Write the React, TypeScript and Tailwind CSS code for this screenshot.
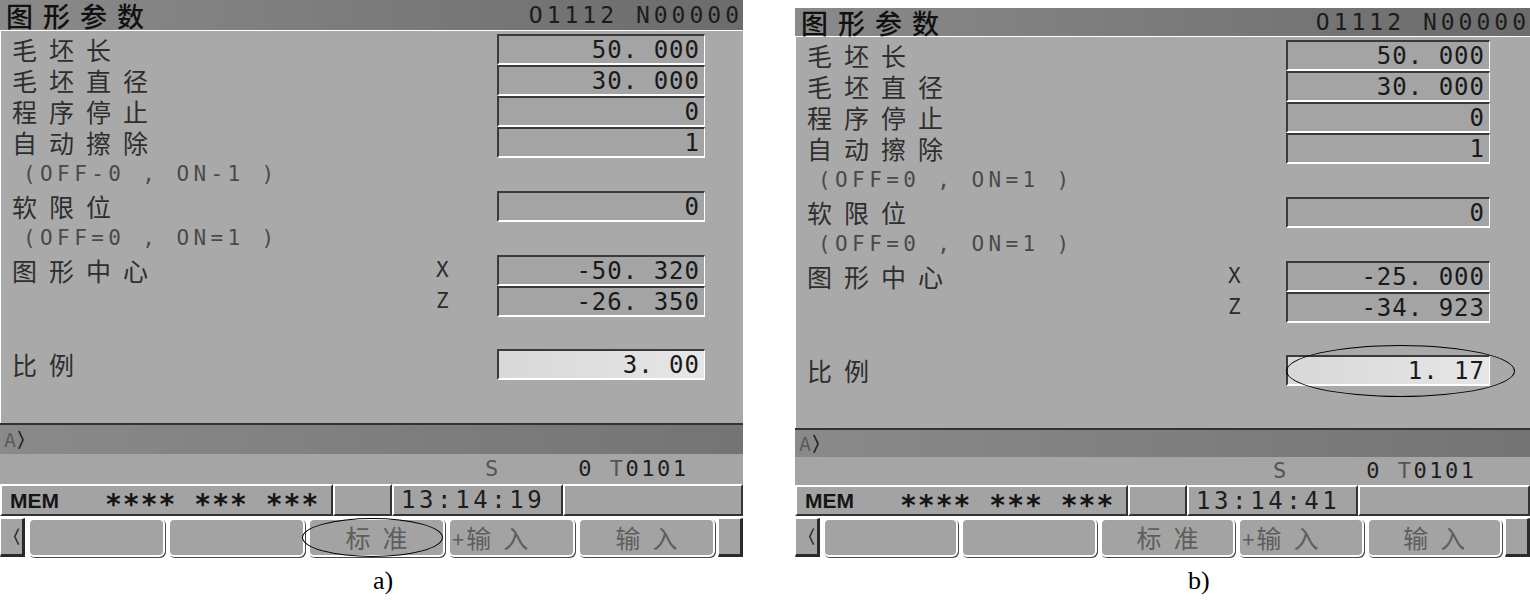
import React from "react";

const mono = "font-['DejaVu_Sans_Mono','Liberation_Mono',monospace]";
const cjk = "font-['Noto_Sans_CJK_SC',sans-serif]";
const serif = "font-['Liberation_Serif',serif]";

type Variant = {
  notes: [string, string];
  values: string[];
  time: string;
  mark: "soft" | "scale";
  wrap: string;
  header: string;
  abar: string;
  status: string;
  sOffset: string;
  mem: string;
  cols: string;
  caption: string;
};

const panels: Variant[] = [
  {
    notes: ["(OFF-0 , ON-1 )", "(OFF=0 , ON=1 )"],
    values: ["50. 000", "30. 000", "0", "1", "0", "-50. 320", "-26. 350", "3. 00"],
    time: "13:14:19",
    mark: "soft",
    wrap: "w-[743px] h-[557px]",
    header: "h-[31px]",
    abar: "h-[29px]",
    status: "h-[30px]",
    sOffset: "ml-[485px]",
    mem: "h-[32px]",
    cols: "grid-cols-[435px_61px_208px]",
    caption: "pl-[373px]",
  },
  {
    notes: ["(OFF=0 , ON=1 )", "(OFF=0 , ON=1 )"],
    values: ["50. 000", "30. 000", "0", "1", "0", "-25. 000", "-34. 923", "1. 17"],
    time: "13:14:41",
    mark: "scale",
    wrap: "w-[735px] h-[549px] mt-[8px]",
    header: "h-[29px]",
    abar: "h-[27px]",
    status: "h-[28px]",
    sOffset: "ml-[478px]",
    mem: "h-[31px]",
    cols: "grid-cols-[432px_58px_204px]",
    caption: "pl-[393px]",
  },
];

const FieldBox: React.FC<{ value: string; light?: boolean; ring?: boolean }> = ({
  value,
  light,
  ring,
}) => (
  <div
    className={`relative flex h-[31px] items-center justify-end border-t-2 border-l-2 border-b-2 border-r border-t-[#3a3a3a] border-l-[#3a3a3a] border-b-white border-r-white pr-[4px] ${
      light ? "bg-linear-to-r from-[#d8d8d8] to-[#e6e6e6]" : "bg-[#a4a4a4]"
    }`}
  >
    <span className={`${mono} slashed-zero text-[24px] leading-none tracking-[1px] text-[#1a1a1a]`}>
      {value}
    </span>
    {ring && (
      <div className="absolute -top-[12px] -bottom-[13px] -left-[2px] -right-[26px] rounded-[50%] border border-black" />
    )}
  </div>
);

const FieldRow: React.FC<{
  cols: string;
  label?: string;
  axis?: string;
  value: string;
  light?: boolean;
  ring?: boolean;
}> = ({ cols, label, axis, value, light, ring }) => (
  <div className={`grid h-[31px] items-center ${cols}`}>
    <span className={`${cjk} pl-[11px] text-[25px] leading-[25px] tracking-[12px] text-[#2e2e2e]`}>
      {label}
    </span>
    <span className={`${mono} text-[21px] leading-none text-[#2a2a2a]`}>{axis}</span>
    <FieldBox value={value} light={light} ring={ring} />
  </div>
);

const NoteRow: React.FC<{ text: string }> = ({ text }) => (
  <div className="flex h-[33px] items-center pl-[22px]">
    <span className={`${mono} slashed-zero whitespace-pre text-[21px] leading-none tracking-[4.4px] text-[#4a4a4a]`}>
      {text}
    </span>
  </div>
);

const SoftButton: React.FC<{ children?: React.ReactNode; left?: boolean; ring?: boolean }> = ({
  children,
  left,
  ring,
}) => (
  <div
    className={`relative flex flex-1 items-center rounded-[6px] border-2 border-white bg-[#a3a3a3] shadow-[1px_1px_0_#4a4a4a] ${
      left ? "justify-start pl-[2px]" : "justify-center pl-[12px]"
    }`}
  >
    <span className={`${cjk} text-[25px] leading-[25px] tracking-[12px] text-[#5e5e5e]`}>{children}</span>
    {ring && <div className="absolute -top-[2px] -bottom-[2px] -left-[8px] right-0 rounded-[50%] border border-black" />}
  </div>
);

const Panel: React.FC<{ p: Variant }> = ({ p }) => (
  <div className="flex flex-col">
    <div className={`flex flex-col ${p.wrap}`}>
      <div
        className={`flex shrink-0 items-center justify-between border-b border-white bg-linear-to-r from-[#8a8a8a] to-[#6c6c6c] pl-[6px] ${p.header}`}
      >
        <span className={`${cjk} text-[27px] font-medium leading-[27px] tracking-[10px] text-[#111]`}>
          图形参数
        </span>
        <span className={`${mono} slashed-zero text-[23px] leading-none tracking-[4px] text-[#1c1c1c]`}>
          O1112 N00000
        </span>
      </div>

      <div className="flex-1 border-l border-white bg-[#a9a9a9] pt-[3px]">
        <FieldRow cols={p.cols} label="毛坯长" value={p.values[0]} />
        <FieldRow cols={p.cols} label="毛坯直径" value={p.values[1]} />
        <FieldRow cols={p.cols} label="程序停止" value={p.values[2]} />
        <FieldRow cols={p.cols} label="自动擦除" value={p.values[3]} />
        <NoteRow text={p.notes[0]} />
        <FieldRow cols={p.cols} label="软限位" value={p.values[4]} />
        <NoteRow text={p.notes[1]} />
        <FieldRow cols={p.cols} label="图形中心" axis="X" value={p.values[5]} />
        <FieldRow cols={p.cols} axis="Z" value={p.values[6]} />
        <div className="h-[32px]" />
        <FieldRow cols={p.cols} label="比例" value={p.values[7]} light ring={p.mark === "scale"} />
      </div>

      <div
        className={`flex shrink-0 items-center border-t-2 border-[#333] bg-linear-to-r from-[#8a8a8a] to-[#747474] pl-[4px] box-content ${p.abar}`}
      >
        <span className={`${mono} text-[20px] leading-none text-[#5c5c5c]`}>A</span>
        <span className={`${mono} text-[20px] font-bold leading-none text-[#1a1a1a]`}>〉</span>
      </div>

      <div className={`flex shrink-0 items-center bg-[#a5a5a5] ${p.status}`}>
        <span className={`${mono} text-[22px] leading-none text-[#555] ${p.sOffset}`}>S</span>
        <span className={`${mono} slashed-zero ml-[80px] text-[22px] leading-none tracking-[2.5px] text-[#1e1e1e]`}>
          0 <span className="text-[#555]">T</span>0101
        </span>
      </div>

      <div className={`flex shrink-0 bg-[#a3a3a3] ${p.mem}`}>
        <div className="flex w-[333px] items-center border-t-2 border-l-2 border-white border-r-2 border-r-[#333] border-b-2 border-b-[#333] pl-[8px]">
          <span className="w-[95px] font-['Liberation_Sans',sans-serif] text-[21px] font-bold leading-none text-[#151515]">
            MEM
          </span>
          <span className={`${mono} translate-y-[5px] whitespace-pre text-[28px] font-bold leading-none tracking-[1px] text-[#151515]`}>
            **** *** ***
          </span>
        </div>
        <div className="w-[59px] border-t-2 border-l-2 border-white border-r-2 border-r-[#333] border-b-2 border-b-[#333]" />
        <div className="flex w-[171px] items-center border-t-2 border-l-2 border-white border-r-2 border-r-[#333] border-b-2 border-b-[#333] pl-[7px]">
          <span className={`${mono} text-[24px] leading-none tracking-[3.6px] text-[#1e1e1e]`}>{p.time}</span>
        </div>
        <div className="flex-1 border-t-2 border-l-2 border-white border-r-2 border-r-[#333] border-b-2 border-b-[#333]" />
      </div>

      <div className="flex h-[41px] shrink-0 gap-[3px] pt-[2px]">
        <div className="flex w-[25px] items-center justify-center border-t border-l border-white border-r-[3px] border-b-[3px] border-r-[#2a2a2a] border-b-[#2a2a2a] bg-[#a3a3a3]">
          <span className={`${mono} text-[18px] font-bold leading-none text-[#222]`}>〈</span>
        </div>
        <SoftButton />
        <SoftButton />
        <SoftButton ring={p.mark === "soft"}>标准</SoftButton>
        <SoftButton left>
          <span className="text-[22px] tracking-[2px]">+</span>输入
        </SoftButton>
        <SoftButton>输入</SoftButton>
        <div className="w-[25px] border-t border-l border-white border-r-[3px] border-b-[3px] border-r-[#2a2a2a] border-b-[#2a2a2a] bg-[#a3a3a3]" />
      </div>
    </div>
    <div className={`flex h-[48px] items-center ${p.caption}`}>
      <span className={`${serif} text-[26px] leading-none text-black`}>
        {p.mark === "soft" ? "a)" : "b)"}
      </span>
    </div>
  </div>
);

export default function App() {
  return (
    <div className="flex h-[605px] w-[1530px] gap-[52px] overflow-hidden bg-white">
      <Panel p={panels[0]} />
      <Panel p={panels[1]} />
    </div>
  );
}
